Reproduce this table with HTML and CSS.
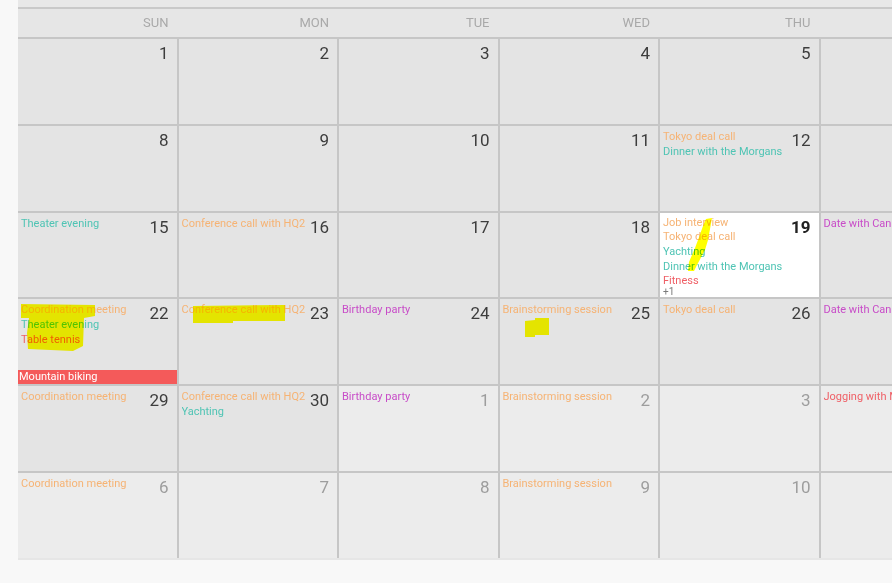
FILE: index.html
```html
<!DOCTYPE html>
<html>
<head>
<meta charset="utf-8">
<title>June 2014</title>
<link rel="stylesheet" href="styles.css">
</head>
<body>
<div class="cal">
  <div class="title"><span>June 2014</span></div>
  <div class="dow">
    <div>SUN</div><div>MON</div><div>TUE</div><div>WED</div><div>THU</div><div>FRI</div><div>SAT</div>
  </div>
  <div class="grid">
    <!-- row 1 -->
    <div class="cell"><div class="head"><div class="evs"></div><div class="num">1</div></div></div>
    <div class="cell"><div class="head"><div class="evs"></div><div class="num">2</div></div></div>
    <div class="cell"><div class="head"><div class="evs"></div><div class="num">3</div></div></div>
    <div class="cell"><div class="head"><div class="evs"></div><div class="num">4</div></div></div>
    <div class="cell"><div class="head"><div class="evs"></div><div class="num">5</div></div></div>
    <div class="cell"><div class="head"><div class="evs"></div><div class="num">6</div></div></div>
    <div class="cell"><div class="head"><div class="evs"></div><div class="num">7</div></div></div>
    <!-- row 2 -->
    <div class="cell"><div class="head"><div class="evs"></div><div class="num">8</div></div></div>
    <div class="cell"><div class="head"><div class="evs"></div><div class="num">9</div></div></div>
    <div class="cell"><div class="head"><div class="evs"></div><div class="num">10</div></div></div>
    <div class="cell"><div class="head"><div class="evs"></div><div class="num">11</div></div></div>
    <div class="cell"><div class="head"><div class="evs">
      <div class="ev orange">Tokyo deal call</div>
      <div class="ev teal">Dinner with the Morgans</div>
    </div><div class="num">12</div></div></div>
    <div class="cell"><div class="head"><div class="evs"></div><div class="num">13</div></div></div>
    <div class="cell"><div class="head"><div class="evs"></div><div class="num">14</div></div></div>
    <!-- row 3 -->
    <div class="cell"><div class="head"><div class="evs">
      <div class="ev teal">Theater evening</div>
    </div><div class="num">15</div></div></div>
    <div class="cell"><div class="head"><div class="evs">
      <div class="ev orange">Conference call with HQ2</div>
    </div><div class="num">16</div></div></div>
    <div class="cell"><div class="head"><div class="evs"></div><div class="num">17</div></div></div>
    <div class="cell"><div class="head"><div class="evs"></div><div class="num">18</div></div></div>
    <div class="cell today"><div class="head"><div class="evs">
      <div class="ev orange tight">Job interview</div>
      <div class="ev orange">Tokyo deal call</div>
      <div class="ev teal">Yachting</div>
      <div class="ev teal">Dinner with the Morgans</div>
      <div class="ev red fit">Fitness</div>
      <div class="more">+1</div>
    </div><div class="num">19</div></div></div>
    <div class="cell"><div class="head"><div class="evs">
      <div class="ev magenta">Date with Candice</div>
    </div><div class="num">20</div></div></div>
    <div class="cell"><div class="head"><div class="evs"></div><div class="num">21</div></div></div>
    <!-- row 4 -->
    <div class="cell"><div class="head"><div class="evs">
      <div class="ev orange">Coordination meeting</div>
      <div class="ev teal">Theater evening</div>
      <div class="ev red">Table tennis</div>
    </div><div class="num">22</div></div>
      <div class="bar">Mountain biking</div>
    </div>
    <div class="cell"><div class="head"><div class="evs">
      <div class="ev orange">Conference call with HQ2</div>
    </div><div class="num">23</div></div></div>
    <div class="cell"><div class="head"><div class="evs">
      <div class="ev magenta">Birthday party</div>
    </div><div class="num">24</div></div></div>
    <div class="cell"><div class="head"><div class="evs">
      <div class="ev orange">Brainstorming session</div>
    </div><div class="num">25</div></div></div>
    <div class="cell"><div class="head"><div class="evs">
      <div class="ev orange">Tokyo deal call</div>
    </div><div class="num">26</div></div></div>
    <div class="cell"><div class="head"><div class="evs">
      <div class="ev magenta">Date with Candice</div>
    </div><div class="num">27</div></div></div>
    <div class="cell"><div class="head"><div class="evs"></div><div class="num">28</div></div></div>
    <!-- row 5 -->
    <div class="cell"><div class="head"><div class="evs">
      <div class="ev orange">Coordination meeting</div>
    </div><div class="num">29</div></div></div>
    <div class="cell"><div class="head"><div class="evs">
      <div class="ev orange">Conference call with HQ2</div>
      <div class="ev teal">Yachting</div>
    </div><div class="num">30</div></div></div>
    <div class="cell other"><div class="head"><div class="evs">
      <div class="ev magenta">Birthday party</div>
    </div><div class="num">1</div></div></div>
    <div class="cell other"><div class="head"><div class="evs">
      <div class="ev orange">Brainstorming session</div>
    </div><div class="num">2</div></div></div>
    <div class="cell other"><div class="head"><div class="evs"></div><div class="num">3</div></div></div>
    <div class="cell other"><div class="head"><div class="evs">
      <div class="ev red">Jogging with Mike</div>
    </div><div class="num">4</div></div></div>
    <div class="cell other"><div class="head"><div class="evs"></div><div class="num">5</div></div></div>
    <!-- row 6 -->
    <div class="cell other"><div class="head"><div class="evs">
      <div class="ev orange">Coordination meeting</div>
    </div><div class="num">6</div></div></div>
    <div class="cell other"><div class="head"><div class="evs"></div><div class="num">7</div></div></div>
    <div class="cell other"><div class="head"><div class="evs"></div><div class="num">8</div></div></div>
    <div class="cell other"><div class="head"><div class="evs">
      <div class="ev orange">Brainstorming session</div>
    </div><div class="num">9</div></div></div>
    <div class="cell other"><div class="head"><div class="evs"></div><div class="num">10</div></div></div>
    <div class="cell other"><div class="head"><div class="evs"></div><div class="num">11</div></div></div>
    <div class="cell other"><div class="head"><div class="evs"></div><div class="num">12</div></div></div>
  </div>
</div>

<svg class="marks" width="892" height="583" viewBox="0 0 892 583" aria-hidden="true">
  <polygon points="21,304 95,305 95,316 84,318 83,346 73,351 28,349 27,333 29,318 21,318"/>
  <polygon points="193,306 285,305 285,321 233,321 233,323 193,323"/>
  <polygon points="525,321 535,320 535,318 549,318 549,335 535,335 535,337 525,337"/>
  <polygon points="706,219 712,218 708,240 705,250 697,265 694,271 688,271 689,262 695,248 698,240 703,226"/>
</svg>
</body>
</html>
```

FILE: styles.css
```css
html, body {
  margin: 0;
  padding: 0;
}

body {
  width: 892px;
  height: 583px;
  overflow: hidden;
  background: #f8f8f8;
  font-family: Roboto, "Noto Sans", "Liberation Sans", sans-serif;
}

.cal {
  margin-left: 18px;
  width: 1121.5px;
  height: 560px;
  overflow: hidden;
  background: #e6e6e6;
}

.title {
  height: 7px;
  overflow: hidden;
  text-align: center;
  background: #e8e8e8;
  border-bottom: 2px solid #c9c9c9;
}

.title span {
  display: block;
  font-size: 20px;
  line-height: 24px;
  margin-top: -21px;
  color: #c4c4c4;
}

.dow {
  display: grid;
  grid-template-columns: repeat(7, 158.5px);
  column-gap: 2px;
  height: 28px;
  line-height: 28px;
  font-size: 13px;
  color: #a9a9a9;
  background: #e6e6e6;
}

.dow div {
  text-align: right;
  padding-right: 8px;
}

.grid {
  display: grid;
  grid-template-columns: repeat(7, 158.5px);
  grid-auto-rows: 84.8px;
  gap: 2px;
  padding-top: 2px;
  background: #c6c6c6;
}

.cell {
  background: #e4e4e4;
  display: flex;
  flex-direction: column;
  overflow: hidden;
  min-width: 0;
}

.cell.other {
  background: #ececec;
}

.cell.today {
  background: #ffffff;
}

.head {
  display: flex;
  padding: 3px 8px 0 3px;
  gap: 4px;
}

.evs {
  flex: 1;
  min-width: 0;
  font-size: 11px;
  line-height: 15px;
}

.ev {
  white-space: nowrap;
  overflow: hidden;
}

.ev.tight {
  line-height: 13px;
}

.ev.fit {
  line-height: 13px;
}

.orange { color: #f6b374; }
.teal { color: #4fc4b4; }
.magenta { color: #c84cc8; }
.red { color: #ef5f66; }

.more {
  font-size: 10px;
  line-height: 10px;
  color: #7a7a7a;
}

.num {
  font-size: 17px;
  line-height: 22px;
  color: #3d3d3d;
  flex: none;
}

.other .num {
  color: #9d9d9d;
}

.today .num {
  font-weight: 700;
  color: #222222;
}

.bar {
  margin-top: auto;
  height: 14px;
  background: #f45a5a;
  color: #ffffff;
  font-size: 11px;
  line-height: 14px;
  padding-left: 1px;
  white-space: nowrap;
  overflow: hidden;
}

.marks {
  position: absolute;
  left: 0;
  top: 0;
  pointer-events: none;
  mix-blend-mode: multiply;
  fill: #ffff00;
}
```
